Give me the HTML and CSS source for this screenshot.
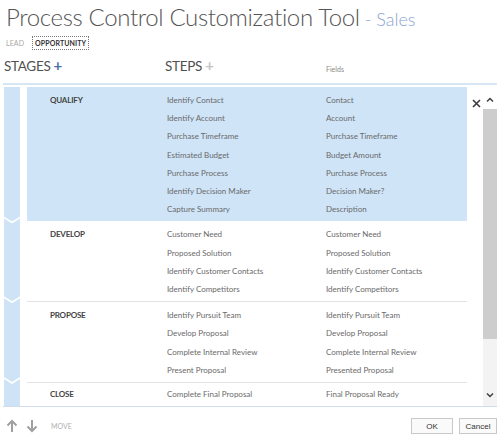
FILE: index.html
```html
<!DOCTYPE html>
<html>
<head>
<meta charset="utf-8">
<link rel="stylesheet" href="styles.css">
</head>
<body>
<div class="title"><span class="main">Process Control Customization Tool</span><span class="sub"> - Sales</span></div>
<div class="tabs"><span class="tab">LEAD</span><span class="tab active">OPPORTUNITY</span></div>
<div class="heads">
  <div class="h-stages">STAGES <span class="plus blue">+</span></div>
  <div class="h-steps">STEPS <span class="plus grey">+</span></div>
  <div class="h-fields">Fields</div>
</div>
<div class="panel">
  <div class="list">
    <div class="stage selected first">
      <div class="stripe"></div>
      <div class="body">
        <div class="name">QUALIFY</div>
        <div class="col steps"><div>Identify Contact</div><div>Identify Account</div><div>Purchase Timeframe</div><div>Estimated Budget</div><div>Purchase Process</div><div>Identify Decision Maker</div><div>Capture Summary</div></div>
        <div class="col fields"><div>Contact</div><div>Account</div><div>Purchase Timeframe</div><div>Budget Amount</div><div>Purchase Process</div><div>Decision Maker?</div><div>Description</div></div>
      </div>
    </div>
    <div class="stage after-selected">
      <div class="stripe"></div>
      <div class="body">
        <div class="name">DEVELOP</div>
        <div class="col steps"><div>Customer Need</div><div>Proposed Solution</div><div>Identify Customer Contacts</div><div>Identify Competitors</div></div>
        <div class="col fields"><div>Customer Need</div><div>Proposed Solution</div><div>Identify Customer Contacts</div><div>Identify Competitors</div></div>
      </div>
    </div>
    <div class="stage">
      <div class="stripe"></div>
      <div class="body">
        <div class="name">PROPOSE</div>
        <div class="col steps"><div>Identify Pursuit Team</div><div>Develop Proposal</div><div>Complete Internal Review</div><div>Present Proposal</div></div>
        <div class="col fields"><div>Identify Pursuit Team</div><div>Develop Proposal</div><div>Complete Internal Review</div><div>Presented Proposal</div></div>
      </div>
    </div>
    <div class="stage last">
      <div class="stripe"></div>
      <div class="body">
        <div class="name">CLOSE</div>
        <div class="col steps"><div>Complete Final Proposal</div></div>
        <div class="col fields"><div>Final Proposal Ready</div></div>
      </div>
    </div>
  </div>
  <div class="side">
    <div class="close">
      <svg width="9" height="9" viewBox="0 0 9 9"><path d="M1 1 L8 8 M8 1 L1 8" stroke="#3c3c3c" stroke-width="1.6" fill="none"/></svg>
    </div>
    <div class="scrollbar">
      <div class="sb-btn"><svg width="8" height="6" viewBox="0 0 8 6"><path d="M1 4.5 L4 1.5 L7 4.5" stroke="#404040" stroke-width="1.5" fill="none"/></svg></div>
      <div class="sb-thumb"></div>
      <div class="sb-track"></div>
      <div class="sb-btn down"><svg width="8" height="6" viewBox="0 0 8 6"><path d="M1 1.5 L4 4.5 L7 1.5" stroke="#404040" stroke-width="1.5" fill="none"/></svg></div>
    </div>
  </div>
</div>
<div class="footer">
  <div class="move">
    <svg width="12" height="14" viewBox="0 0 12 14"><path d="M6 13 V2 M1.5 6.5 L6 2 L10.5 6.5" stroke="#a0a0a0" stroke-width="2" fill="none"/></svg>
    <svg width="12" height="14" viewBox="0 0 12 14"><path d="M6 1 V12 M1.5 7.5 L6 12 L10.5 7.5" stroke="#a0a0a0" stroke-width="2" fill="none"/></svg>
    <span class="move-label">MOVE</span>
  </div>
  <div class="buttons">
    <button class="btn ok">OK</button>
    <button class="btn cancel">Cancel</button>
  </div>
</div>
</body>
</html>
```

FILE: styles.css
```css
* { box-sizing: border-box; }
html, body { margin: 0; padding: 0; background: #fff; }
body {
  width: 500px;
  height: 437px;
  overflow: hidden;
  font-family: "Lato", "Open Sans", sans-serif;
  color: #555;
}
.title {
  padding: 2px 0 0 6px;
  height: 36px;
  line-height: 30px;
  white-space: nowrap;
}
.title .main {
  font-size: 24px;
  font-weight: 300;
  letter-spacing: -0.35px;
  color: #555;
}
.title .sub {
  font-size: 18px;
  font-weight: 300;
  color: #8aa3cf;
}
.tabs {
  display: flex;
  align-items: center;
  gap: 8px;
  padding-left: 6px;
  height: 14px;
}
.tab {
  font-size: 7px;
  color: #a8a8a8;
  letter-spacing: 0.1px;
}
.tab.active {
  color: #333;
  font-weight: 700;
  border: 1px dotted #777;
  padding: 2px 2px;
}
.heads {
  display: flex;
  align-items: flex-end;
  height: 33px;
  padding-bottom: 9px;
}
.h-stages {
  width: 165px;
  padding-left: 4px;
  font-size: 13.5px;
  color: #505050;
  letter-spacing: -0.3px;
}
.h-steps {
  width: 161px;
  font-size: 13.5px;
  color: #505050;
  letter-spacing: -0.3px;
}
.plus { font-weight: 700; font-size: 15px; }
.plus.blue { color: #4a6ea8; }
.plus.grey { color: #c4c4c4; }
.h-fields {
  font-size: 7px;
  color: #888;
  padding-bottom: 1px;
}
.panel {
  margin: 0 3px;
  border-top: 2px solid #d8e5f2;
  border-bottom: 1px solid #cfdcec;
  height: 324px;
  display: flex;
  padding-top: 2px;
}
.list {
  width: 464px;
  overflow: hidden;
}
.stage {
  display: flex;
}
.stripe {
  width: 16px;
  margin-left: 1px;
  margin-right: 7px;
  background: #cfe3f6;
  margin-top: -3px;
  clip-path: polygon(0 0, 50% 5px, 100% 0, 100% calc(100% - 5px), 50% 100%, 0 calc(100% - 5px));
}
.stage.first .stripe {
  margin-top: 0;
  clip-path: polygon(0 0, 100% 0, 100% calc(100% - 5px), 50% 100%, 0 calc(100% - 5px));
}
.stage.last .stripe {
  clip-path: polygon(0 0, 50% 5px, 100% 0, 100% 100%, 0 100%);
}
.body {
  width: 440px;
  display: flex;
  padding: 4px 0 3px 0;
  border-top: 1px solid #e3e3e3;
  font-size: 8px;
  line-height: 18.2px;
  color: #6a6a6a;
}
.stage.last .body { padding-top: 2px; padding-bottom: 6px; }
.stage.first .body { border-top: none; }
.stage.after-selected .body { border-top: none; }
.stage.selected .body { background: #cfe4f7; }
.name {
  width: 140px;
  padding-left: 23px;
  font-weight: 700;
  color: #444;
  letter-spacing: -0.2px;
}
.col.steps { width: 159px; }
.col.fields { width: 141px; }
.side {
  flex: 1;
  display: flex;
  justify-content: flex-end;
  gap: 2px;
}
.close {
  padding-top: 5px;
}
.scrollbar {
  width: 14px;
  display: flex;
  flex-direction: column;
  background: #f3f3f3;
}
.sb-btn {
  height: 22px;
  padding-top: 3px;
  display: flex;
  align-items: center;
  justify-content: center;
  background: #fff;
}
.sb-btn.down { background: #f3f3f3; padding-top: 0; }
.sb-thumb {
  height: 230px;
  background: #cdcdcd;
}
.sb-track { flex: 1; }
.footer {
  display: flex;
  justify-content: space-between;
  align-items: center;
  padding: 11px 3px 0 6px;
}
.move {
  display: flex;
  align-items: center;
  gap: 8px;
}
.move-label {
  font-size: 7px;
  color: #b0b0b0;
  margin-left: 5px;
}
.buttons {
  display: flex;
  gap: 6px;
}
.btn {
  font-family: "Liberation Sans", sans-serif;
  font-size: 8px;
  color: #333;
  background: #fafafa;
  border: 1px solid #c8c8c8;
  height: 16px;
  padding: 0;
}
.btn.ok { width: 42px; }
.btn.cancel { width: 38px; }
```
